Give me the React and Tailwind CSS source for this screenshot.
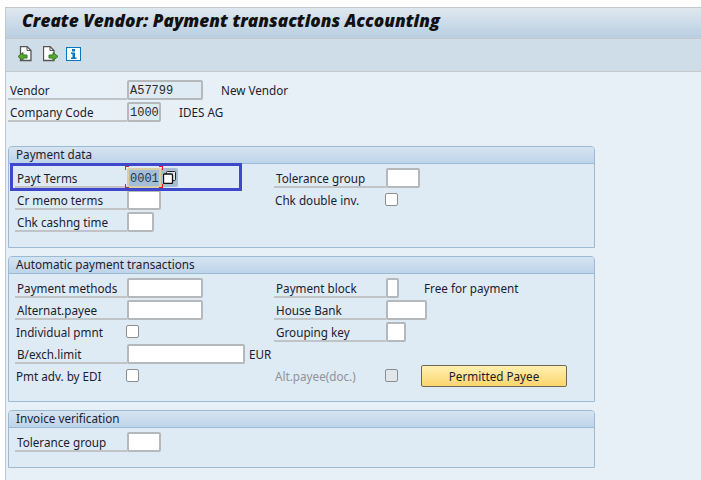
const DocArrow = ({ right }) => (
  <svg width="16" height="16" viewBox="0 0 16 16" className="shrink-0">
    <path d={right ? "M0.500 0.500h6.500l4 4v10h-10.500z" : "M3.500 0.500h6.500l4 4v10h-10.500z"} fill="#fff" stroke="#555" strokeWidth="1.300" />
    <path d={right ? "M7 0.500v4h4" : "M10 0.500v4h4"} fill="none" stroke="#555" strokeWidth="1" />
    {right ? (
      <path d="M6 9h4V6.500l5 4-5 4V12H6z" fill="#5aa632" stroke="#2f7a1e" strokeWidth="1" />
    ) : (
      <path d="M10 9H6V6.500l-5 4 5 4V12h4z" fill="#5aa632" stroke="#2f7a1e" strokeWidth="1" />
    )}
  </svg>
);

const InfoIcon = () => (
  <svg width="15" height="14" viewBox="0 0 15 14" className="mt-[1px] shrink-0">
    <rect x="0.500" y="0.500" width="14" height="13" fill="#fff" stroke="#0a77bd" />
    <rect x="6" y="2" width="3" height="2.500" fill="#0a77bd" />
    <path d="M5 5.500h4v5h1.500V12h-5.500v-1.500h1.500V7H5z" fill="#0a77bd" />
  </svg>
);

const CopyIcon = () => (
  <svg width="13" height="13" viewBox="0 0 13 13">
    <rect x="3.500" y="0.500" width="9" height="9" rx="1" fill="#dfe6ee" stroke="#222" />
    <rect x="0.500" y="3" width="9" height="9.500" rx="1" fill="#fff" stroke="#111" strokeWidth="1.300" />
  </svg>
);

function Input({ w, value, readOnly }) {
  return (
    <div
      className={`${w} h-[20px] shrink-0 rounded-[2px] border-2 border-[#b5b9bc] pl-[1px] text-[12px] leading-[19px] text-[#2c2c2c] [font-family:'Liberation_Mono',monospace] ${
        readOnly ? "bg-[#deeaf4]" : "bg-white"
      }`}
    >
      {value}
    </div>
  );
}

function Check({ disabled }) {
  return (
    <div
      className={`ml-[-1px] size-[13px] shrink-0 rounded-[2px] border border-[#8b8f92] ${
        disabled ? "bg-[#e1e6ea]" : "bg-white"
      }`}
    />
  );
}

// label with the underline running up to the field
function Row({ label, children, underline = true, disabled, labelPad = "pl-[2px]" }) {
  return (
    <div className="flex h-[20px] items-start">
      <div
        className={`h-[20px] w-[112px] shrink-0 leading-[21px] ${labelPad} ${
          underline ? "border-b-2 border-[#c0c4c7]" : ""
        } ${disabled ? "text-[#8f9498]" : ""}`}
      >
        {label}
      </div>
      {children}
    </div>
  );
}

function Panel({ title, heightClass, children }) {
  return (
    <section className={`${heightClass} rounded-t-[4px] border border-[#9dbad5] bg-[#deeaf4]`}>
      <div className="h-[17px] rounded-t-[3px] border-b border-[#9dbad5] bg-linear-to-b from-[#d6e4f1] to-[#bdd4e9] pl-[7px] leading-[15px]">
        {title}
      </div>
      {children}
    </section>
  );
}

export default function App() {
  return (
    <div className="relative h-[480px] w-[701px] overflow-hidden bg-white pl-[5px] pt-[7px] text-[11.7px] text-[#1c1c30] [font-family:'Noto_Sans',sans-serif]">
      <div className="h-[473px] border-l border-t border-[#c3c8cc] bg-[#e8f0f7]">
        {/* title */}
        <div className="flex h-[30px] items-center bg-linear-to-b from-[#dfe8f0] to-[#b9cee1] pb-[4px] pl-[16px] text-[17.25px] font-extrabold italic text-[#111] [font-family:'Open_Sans',sans-serif]">
          Create Vendor: Payment transactions Accounting
        </div>
        {/* toolbar */}
        <div className="flex h-[34px] items-start border-y border-[#c4c9cc] bg-[#cfdde9] pl-[11px] pt-[7px]">
          <DocArrow />
          <span className="ml-[10px]"><DocArrow right /></span>
          <span className="ml-[7px]"><InfoIcon /></span>
        </div>

        <div className="flex flex-col gap-[2px] pl-[2px] pt-[8px]">
          <div className="flex h-[20px]">
            <div className="h-[20px] w-[119px] border-b-2 border-[#c0c4c7] pl-[2px] leading-[21px]">Vendor</div>
            <Input w="w-[76px]" value="A57799" readOnly />
            <span className="ml-[18px] leading-[21px]">New Vendor</span>
          </div>
          <div className="flex h-[20px]">
            <div className="h-[20px] w-[119px] border-b-2 border-[#c0c4c7] pl-[2px] leading-[21px]">Company Code</div>
            <Input w="w-[34px]" value="1000" readOnly />
            <span className="ml-[18px] leading-[21px]">IDES AG</span>
          </div>
        </div>

        <div className="flex w-[589px] flex-col gap-[8px] pl-[2px] pt-[24px]">
          <Panel title="Payment data" heightClass="h-[102px]">
            <div className="grid grid-cols-[259px_1fr] pl-[6px] pt-[4px]">
              <div className="flex flex-col gap-[2px]">
                <Row label="Payt Terms">
                  <div className="flex">
                    <div className="h-[20px] w-[34px] rounded-[2px] border-2 border-[#d8cfa4] bg-[#a4bdd9] pl-[1px] text-[12px] leading-[19px] text-[#24364d] [font-family:'Liberation_Mono',monospace]">
                      0001
                    </div>
                    <div className="flex h-[19px] w-[17px] items-center justify-center rounded-r-[2px] bg-[#a9bdd2]">
                      <CopyIcon />
                    </div>
                  </div>
                </Row>
                <Row label="Cr memo terms">
                  <Input w="w-[34px]" />
                </Row>
                <Row label="Chk cashng time">
                  <Input w="w-[27px]" />
                </Row>
              </div>
              <div className="flex flex-col gap-[2px]">
                <Row label="Tolerance group">
                  <Input w="w-[34px]" />
                </Row>
                <Row label="Chk double inv." underline={false} labelPad="pl-[1px]">
                  <div className="pt-[3px]"><Check /></div>
                </Row>
              </div>
            </div>
          </Panel>

          <Panel title="Automatic payment transactions" heightClass="h-[146px]">
            <div className="grid grid-cols-[259px_1fr] pl-[6px] pt-[4px]">
              <div className="flex flex-col gap-[2px]">
                <Row label="Payment methods">
                  <Input w="w-[76px]" />
                </Row>
                <Row label="Alternat.payee">
                  <Input w="w-[76px]" />
                </Row>
                <Row label="Individual pmnt" underline={false} labelPad="pl-[1px]">
                  <div className="pt-[3px]"><Check /></div>
                </Row>
                <Row label="B/exch.limit">
                  <Input w="w-[118px]" />
                  <span className="ml-[4px] leading-[21px]">EUR</span>
                </Row>
                <Row label="Pmt adv. by EDI" underline={false} labelPad="pl-[1px]">
                  <div className="pt-[3px]"><Check /></div>
                </Row>
              </div>
              <div className="flex flex-col gap-[2px]">
                <Row label="Payment block">
                  <Input w="w-[13px]" />
                  <span className="ml-[25px] leading-[21px]">Free for payment</span>
                </Row>
                <Row label="House Bank">
                  <Input w="w-[41px]" />
                </Row>
                <Row label="Grouping key">
                  <Input w="w-[20px]" />
                </Row>
                <div className="h-[20px]" />
                <Row label="Alt.payee(doc.)" underline={false} disabled labelPad="pl-[1px]">
                  <div className="pt-[3px]"><Check disabled /></div>
                  <button className="ml-[23px] mt-[-1px] h-[22px] w-[146px] shrink-0 rounded-[2px] border border-[#6f6a58] bg-linear-to-b from-[#fff0b0] to-[#fbd56c] text-center leading-[19px] text-[#1c1c30]">
                    Permitted Payee
                  </button>
                </Row>
              </div>
            </div>
          </Panel>

          <Panel title="Invoice verification" heightClass="h-[58px]">
            <div className="pl-[6px] pt-[4px]">
              <Row label="Tolerance group">
                <Input w="w-[34px]" />
              </Row>
            </div>
          </Panel>
        </div>
      </div>

      {/* highlight drawn over the Payt Terms row */}
      <div className="absolute left-[10px] top-[163px] h-[28px] w-[232px] border-[3px] border-[#3f48cc]" />
      {/* red required-field corners */}
      <div className="absolute left-[125px] top-[166px] size-[4px] border-l border-t border-[#ed1c24]" />
      <div className="absolute left-[159px] top-[166px] size-[4px] border-r border-t border-[#ed1c24]" />
      <div className="absolute left-[125px] top-[184px] size-[4px] border-b border-l border-[#ed1c24]" />
      <div className="absolute left-[159px] top-[184px] size-[4px] border-b border-r border-[#ed1c24]" />
    </div>
  );
}
